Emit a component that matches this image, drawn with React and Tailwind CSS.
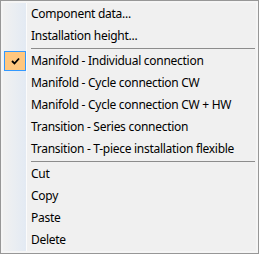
import React from 'react';

// --- Context menu for a pipe component ---

const menuGroups = [
  [
    { label: 'Component data...' },
    { label: 'Installation height...' },
  ],
  [
    { label: 'Manifold - Individual connection', checked: true },
    { label: 'Manifold - Cycle connection CW' },
    { label: 'Manifold - Cycle connection CW + HW' },
    { label: 'Transition - Series connection' },
    { label: 'Transition - T-piece installation flexible' },
  ],
  [
    { label: 'Cut' },
    { label: 'Copy' },
    { label: 'Paste' },
    { label: 'Delete' },
  ],
];

const Gutter = ({ children }) => (
  <div className="w-[24px] self-stretch shrink-0 bg-gradient-to-r from-[#f1f1f1] to-[#e3eaf3] border-r border-[#fbfbfb] flex items-center">
    {children}
  </div>
);

const MenuItem = ({ item }) => (
  <div className="flex h-[22px] items-center">
    <Gutter>
      {item.checked && (
        <div className="ml-[1px] w-[22px] h-[20px] bg-[#ffc77f] border border-[#3399ff] flex items-center justify-center">
          <svg width="9" height="8" viewBox="0 0 9 8">
            <path d="M1 4 L3.5 6.5 L8 1.5" fill="none" stroke="#000" strokeWidth="1.8" />
          </svg>
        </div>
      )}
    </Gutter>
    <span className="pl-[4px] text-[12px] tracking-[-0.28px] leading-none text-black whitespace-nowrap">{item.label}</span>
  </div>
);

const Separator = () => (
  <div className="flex h-[3px]">
    <Gutter />
    <div className="flex-1 pl-[4px] pr-[1px] pt-[1px]">
      <div className="h-[1px] bg-[#8c8c8c]" />
    </div>
  </div>
);

export default function App() {
  return (
    <div
      className="w-[259px] h-[254px] border border-[#979797] bg-[#f5f5f5] p-[2px]"
      style={{ fontFamily: '"Noto Sans", "Open Sans", sans-serif' }}
    >
      <div className="h-full bg-[#f0f0f0] flex flex-col">
        {menuGroups.map((group, gi) => (
          <React.Fragment key={gi}>
            {gi > 0 && <Separator />}
            {group.map((item) => (
              <MenuItem key={item.label} item={item} />
            ))}
          </React.Fragment>
        ))}
      </div>
    </div>
  );
}
